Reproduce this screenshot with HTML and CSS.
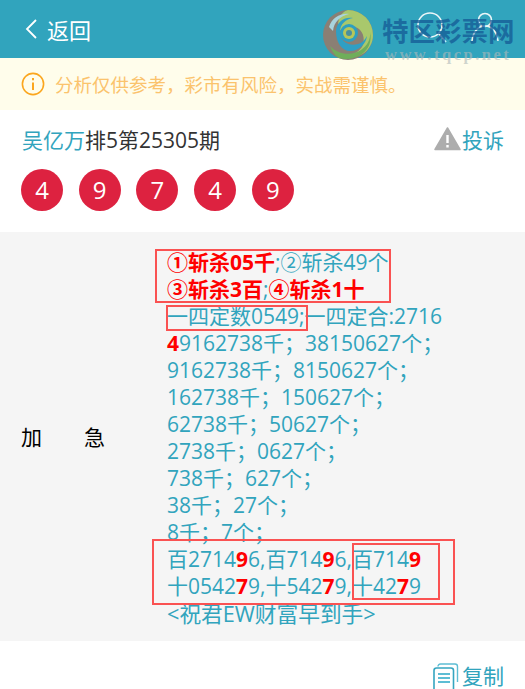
FILE: index.html
```html
<!DOCTYPE html>
<html lang="zh-CN">
<head>
    <meta charset="UTF-8">
    <title>返回</title>
    <link rel="stylesheet" href="styles.css">
</head>
<body>
    <header class="topbar">
        <a class="back">
            <svg class="back-icon" width="14" height="22" viewBox="0 0 14 22"><path d="M12 2 3 11l9 9" fill="none" stroke="#fff" stroke-width="1.8"/></svg>
            <span>返回</span>
        </a>
        <div class="tools">
            <svg width="30" height="32" viewBox="0 0 30 32"><circle cx="13" cy="13" r="12" fill="none" stroke="#fff" stroke-width="1.600"/><path d="M22 22l7 8" stroke="#fff" stroke-width="1.600"/></svg>
            <svg width="30" height="32" viewBox="0 0 30 32"><circle cx="15" cy="8" r="6.500" fill="none" stroke="#fff" stroke-width="1.600"/><path d="M2 29c1-9 6-15 13-15s12 6 13 15" fill="none" stroke="#fff" stroke-width="1.600"/></svg>
        </div>
        <div class="watermark">
            <svg class="wm-logo" width="52" height="52" viewBox="0 0 52 52">
                <circle cx="26" cy="26" r="25" fill="#8a7f74"/>
                <path d="M26 1a25 25 0 0 1 25 25c0 8-4 14-9 18-6 4-14 5-21 3 8 0 15-3 19-9 3-6 2-14-3-18-6-5-16-3-20 3-3-10 1-20 9-22z" fill="#a9c86c"/>
                <path d="M8 37c8 9 22 10 31 4 6-4 10-11 9-18 2 9-1 17-8 22-7 5-16 6-23 4-4-2-7-7-9-12z" fill="#6fae5a"/>
                <path d="M14 22c0-8 8-15 17-13-7 1-13 6-13 14 0 9 9 15 18 12 4-1 7-4 9-8-1 8-8 15-17 15-8 0-14-8-14-20z" fill="#2f9fc4"/>
                <circle cx="27" cy="24" r="9" fill="#2e9fc0"/>
                <circle cx="27" cy="24" r="6" fill="#b6c65a"/>
                <circle cx="27" cy="24" r="3" fill="#4a8f9e"/>
                <path d="M7 18C10 9 18 4 27 5 18 7 12 13 11 22z" fill="#a8d4dd"/>
            </svg>
            <div class="wm-text">
                <div class="wm-name">特区彩票网</div>
                <div class="wm-url">www.tqcp.net</div>
            </div>
        </div>
    </header>

    <div class="notice">
        <svg width="24" height="24" viewBox="0 0 24 24"><circle cx="12" cy="12" r="10.600" fill="none" stroke="#fba61e" stroke-width="1.600"/><path d="M12 10.500v7.500M12 6v2.200" stroke="#fba61e" stroke-width="2"/></svg>
        <span>分析仅供参考，彩市有风险，实战需谨慎。</span>
    </div>

    <section class="info">
        <div class="title-row">
            <h1 class="title"><span class="author">吴亿万</span>排5第25305期</h1>
            <a class="report">
                <svg width="27" height="24" viewBox="0 0 27 24"><path d="M13.500 1 26 22.500H1z" fill="#adadad" stroke="#adadad" stroke-width="1.500" stroke-linejoin="round"/><path d="M13.500 8v8M13.500 18v2.400" stroke="#fff" stroke-width="2.400"/></svg>
                <span>投诉</span>
            </a>
        </div>
        <div class="balls">
            <span class="ball">4</span>
            <span class="ball">9</span>
            <span class="ball">7</span>
            <span class="ball">4</span>
            <span class="ball">9</span>
        </div>
    </section>

    <section class="detail">
        <div class="label">加<i class="label-gap"></i>急</div>
        <div class="content">
            <b>①斩杀05千</b>;②斩杀49个<br>
            <b>③斩杀3百</b>;<b>④斩杀1十</b><br>
            一四定数0549;一四定合:2716<br>
            <b>4</b>9162738千；38150627个；<br>
            9162738千；8150627个；<br>
            162738千；150627个；<br>
            62738千；50627个；<br>
            2738千；0627个；<br>
            738千；627个；<br>
            38千；27个；<br>
            8千；7个；<br>
            百2714<b>9</b>6,百714<b>9</b>6,百714<b>9</b><br>
            十0542<b>7</b>9,十542<b>7</b>9,十42<b>7</b>9<br>
            <span class="wish">&lt;祝君EW财富早到手&gt;</span>
            <i class="mark mark-kill"></i>
            <i class="mark mark-fix"></i>
            <i class="mark mark-tail"></i>
            <i class="mark mark-tail-inner"></i>
        </div>
    </section>

    <footer class="actions">
        <a class="copy">
            <svg width="26" height="26" viewBox="0 0 26 26"><path d="M5 3.500C5 2 6 1 7.500 1H22c1.500 0 2.500 1 2.500 2.500V19" fill="none" stroke="#5dbdd4" stroke-width="1.400"/><rect x="1" y="5" width="19.500" height="24" rx="2.500" fill="#fff" stroke="#35a5c0" stroke-width="1.600"/><path d="M5 11h12M5 15h12M5 19h12" stroke="#5dbdd4" stroke-width="1.800"/></svg>
            <span>复制</span>
        </a>
    </footer>
</body>
</html>
```

FILE: styles.css
```css
html, body {
    margin: 0;
    padding: 0;
}

body {
    width: 525px;
    height: 689px;
    overflow: hidden;
    background: #fff;
    font-family: "Open Sans", "Noto Sans CJK SC", sans-serif;
    font-size: 21px;
    color: #333;
}

/* 顶部栏 */
.topbar {
    position: relative;
    height: 58px;
    box-sizing: border-box;
    padding: 0 25px 0 24px;
    background: #31a4bd;
    display: flex;
    align-items: center;
    justify-content: space-between;
}

.back {
    display: flex;
    align-items: center;
    gap: 9px;
    color: #fff;
    font-size: 22px;
    margin-top: -1px;
}

.tools {
    display: flex;
    gap: 23px;
    margin-top: -2px;
    opacity: 0.9;
}

/* 水印 */
.watermark {
    position: absolute;
    top: 9px;
    left: 322px;
    width: 203px;
    display: flex;
    gap: 8px;
}

.wm-logo {
    flex: none;
}

.wm-text {
    padding-top: 7px;
}

.wm-name {
    font-size: 26.500px;
    line-height: 30px;
    font-weight: 700;
    white-space: nowrap;
    color: rgba(20, 90, 150, 0.75);
}

.wm-url {
    padding-left: 3px;
    font-family: "Liberation Serif", serif;
    font-size: 16.500px;
    line-height: 18px;
    font-weight: 700;
    letter-spacing: 2.500px;
    white-space: nowrap;
    color: rgba(175, 185, 185, 0.6);
}

/* 提示 */
.notice {
    height: 52px;
    box-sizing: border-box;
    padding: 0 21px;
    background: #fffdeb;
    display: flex;
    align-items: center;
    gap: 10px;
    color: #fbc36d;
    font-size: 18.500px;
}

/* 标题和号码 */
.info {
    height: 122px;
    box-sizing: border-box;
    padding: 13px 21px 0 22px;
}

.title-row {
    display: flex;
    justify-content: space-between;
    align-items: center;
    height: 32px;
}

.title {
    margin: 0;
    font-size: 21px;
    font-weight: 400;
    color: #333;
}

.author {
    color: #31a4bd;
}

.report {
    display: flex;
    align-items: center;
    gap: 1px;
    color: #31a4bd;
}

.balls {
    display: flex;
    gap: 15.700px;
    margin: 14px 0 0 -1px;
}

.ball {
    width: 42px;
    height: 42px;
    border-radius: 50%;
    background: #dd2240;
    color: #fff;
    font-size: 24px;
    line-height: 42px;
    text-align: center;
}

/* 内容 */
.detail {
    height: 409px;
    background: #f5f5f5;
    display: flex;
    align-items: center;
}

.label {
    width: 167px;
    box-sizing: border-box;
    padding-left: 21px;
    margin-top: -1px;
    color: #000;
    display: flex;
    font-size: 21px;
}

.label-gap {
    width: 42px;
}

.content {
    position: relative;
    color: #31a4bd;
    font-size: 21px;
    line-height: 27px;
    white-space: nowrap;
    margin-top: 3px;
}

.content b {
    color: #f00;
}

.wish {
    font-size: 21.700px;
}

.mark {
    position: absolute;
    box-sizing: border-box;
    border: 2px solid #fa5252;
}

.mark-kill {
    left: -12px;
    top: 0;
    width: 236px;
    height: 54px;
}

.mark-fix {
    left: -1px;
    top: 56px;
    width: 142px;
    height: 26px;
}

.mark-tail {
    left: -15px;
    top: 290px;
    width: 303px;
    height: 66px;
}

.mark-tail-inner {
    left: 185px;
    top: 294px;
    width: 88px;
    height: 57px;
}

/* 底部 */
.actions {
    height: 48px;
    box-sizing: border-box;
    padding: 22px 21px 0 0;
    display: flex;
    justify-content: flex-end;
}

.copy {
    display: flex;
    align-items: center;
    gap: 3px;
    height: 26px;
    line-height: 26px;
    color: #31a4bd;
}
```
